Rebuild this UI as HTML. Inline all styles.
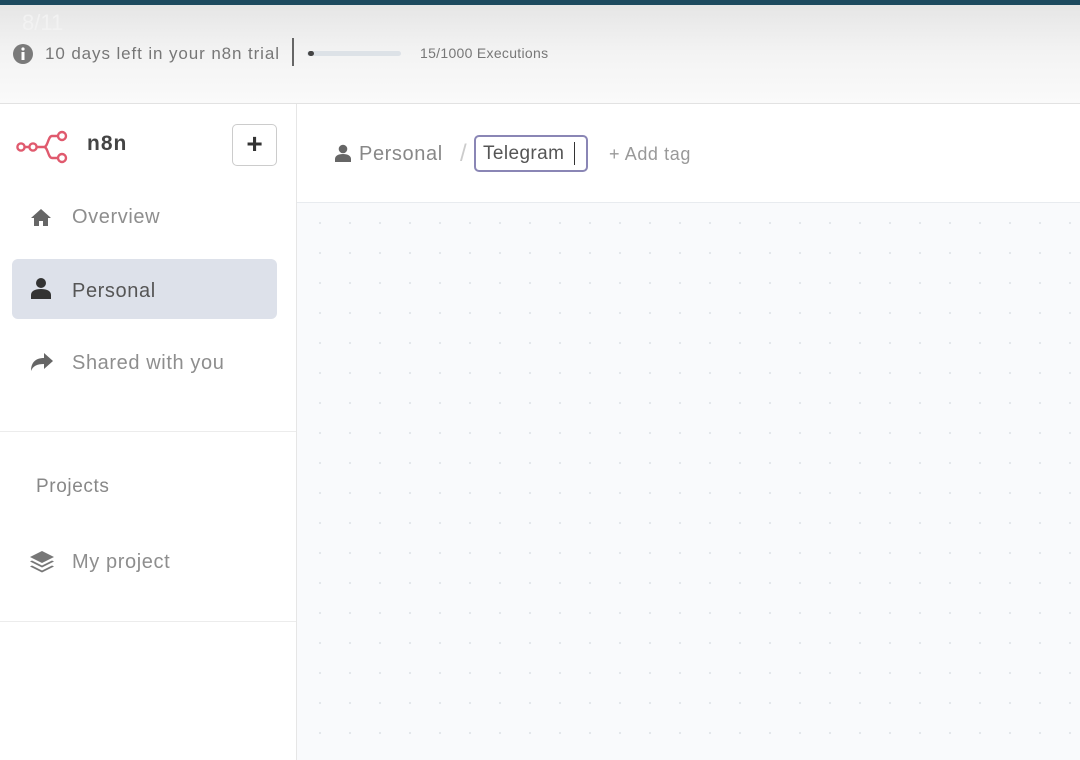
<!DOCTYPE html>
<html><head><meta charset="utf-8"><style>
*{box-sizing:border-box;margin:0;padding:0}
body{width:1080px;height:760px;overflow:hidden;font-family:"Liberation Sans",sans-serif;background:#fff;position:relative}
.top{position:absolute;left:0;top:0;width:1080px;height:104px;background:linear-gradient(#e4e4e4,#f3f3f3 50%,#fafafa);border-bottom:1px solid #e2e2e2}
.top .bar{position:absolute;left:0;top:0;width:1080px;height:5px;background:#1d4a5f}
.side{position:absolute;left:0;top:104px;width:297px;height:656px;background:#fff;border-right:1px solid #e6e6e6}
.hdr{position:absolute;left:297px;top:104px;width:783px;height:99px;background:#fff;border-bottom:1px solid #e8ebef}
.canvas{position:absolute;left:297px;top:203px;width:783px;height:557px;background-color:#f9fafc;background-image:radial-gradient(circle,#e3e6ea 1px,transparent 1.3px);background-size:30px 30px;background-position:8px 5px}
.t{position:absolute;white-space:nowrap}
.nav{position:absolute;left:30px;font-size:20px;color:#8e8e8e;letter-spacing:0.6px}
</style></head><body>
<div class="top"><div class="bar"></div>
<div class="t" style="left:22px;top:10px;font-size:22px;color:#f2f2f2">8/11</div>
<svg class="t" style="left:12px;top:43px" width="22" height="22"><circle cx="11" cy="11" r="10" fill="#7a7a7a"/><rect x="9.5" y="9" width="3" height="8" fill="#fff"/><circle cx="11" cy="6" r="1.6" fill="#fff"/></svg>
<div class="t" style="left:45px;top:44px;font-size:17px;color:#777;letter-spacing:0.9px">10 days left in your n8n trial</div>
<div class="t" style="left:292px;top:38px;width:2px;height:28px;background:#666"></div>
<div class="t" style="left:307px;top:51px;width:94px;height:5px;background:#dde2e7;border-radius:3px"></div>
<div class="t" style="left:308px;top:51px;width:6px;height:5px;background:#444;border-radius:3px"></div>
<div class="t" style="left:420px;top:45px;font-size:14px;color:#777;letter-spacing:0.3px">15/1000 Executions</div>
</div>
<div class="side">
<svg class="t" style="left:16px;top:24px" width="60" height="36" viewBox="0 0 60 36"><g fill="none" stroke="#e05a6e" stroke-width="2.4"><circle cx="5" cy="19" r="3.6"/><circle cx="17" cy="19" r="3.6"/><circle cx="46" cy="8" r="4"/><circle cx="46" cy="30" r="4"/><path d="M8.6 19H13.4M20.6 19H28M42 8H36C32 8 32 19 28 19C32 19 32 30 36 30H42"/></g></svg>
<div class="t" style="left:87px;top:28px;font-size:21px;font-weight:bold;color:#444;letter-spacing:1px">n8n</div>
<div class="t" style="left:232px;top:20px;width:45px;height:42px;border:1px solid #ccc;border-radius:5px;background:#fff;text-align:center;font-size:28px;line-height:38px;color:#333;font-weight:bold">+</div>
<svg class="t" style="left:30px;top:103px" width="22" height="20" viewBox="0 0 22 20"><path d="M11 2L1 11h3v8h5v-5h4v5h5v-8h3z" fill="#666"/></svg>
<div class="nav" style="left:72px;top:102px">Overview</div>
<div class="t" style="left:12px;top:155px;width:265px;height:60px;background:#dde1ea;border-radius:6px"></div>
<svg class="t" style="left:31px;top:173px" width="20" height="22" viewBox="0 0 20 22"><circle cx="10" cy="6" r="5" fill="#333"/><path d="M0 22v-4c0-4 4-6 10-6s10 2 10 6v4z" fill="#333"/></svg>
<div class="nav" style="left:72px;top:176px;color:#555">Personal</div>
<svg class="t" style="left:30px;top:248px" width="24" height="20" viewBox="0 0 24 20"><path d="M14 1l9 8-9 8v-5C7 12 3 14 1 19 1 11 5 6 14 6z" fill="#666"/></svg>
<div class="nav" style="left:72px;top:248px">Shared with you</div>
<div class="t" style="left:0;top:327px;width:296px;height:1px;background:#ececec"></div>
<div class="t" style="left:36px;top:372px;font-size:19px;color:#888;letter-spacing:0.6px">Projects</div>
<svg class="t" style="left:29px;top:446px" width="26" height="24" viewBox="0 0 26 24"><g fill="#777"><path d="M13 1l12 6-12 6L1 7z"/><path d="M3 10.5l10 5 10-5 2 1-12 6-12-6z"/><path d="M3 15.5l10 5 10-5 2 1-12 6-12-6z"/></g></svg>
<div class="nav" style="left:72px;top:447px">My project</div>
<div class="t" style="left:0;top:517px;width:296px;height:1px;background:#ececec"></div>
</div>
<div class="hdr">
<svg class="t" style="left:38px;top:40px" width="16" height="18" viewBox="0 0 16 18"><circle cx="8" cy="5" r="4.3" fill="#666"/><path d="M0 18v-3c0-3 3-5 8-5s8 2 8 5v3z" fill="#666"/></svg>
<div class="t" style="left:62px;top:39px;font-size:20px;color:#888;letter-spacing:0.6px">Personal</div>
<div class="t" style="left:163px;top:36px;font-size:24px;color:#ccc">/</div>
<div class="t" style="left:177px;top:31px;width:114px;height:37px;border:2px solid #8a86b5;border-radius:5px;background:#fff"></div>
<div class="t" style="left:186px;top:39px;font-size:19px;color:#555;letter-spacing:0.4px">Telegram</div>
<div class="t" style="left:277px;top:38px;width:1px;height:23px;background:#333"></div>
<div class="t" style="left:312px;top:40px;font-size:18px;color:#999;letter-spacing:0.6px">+ Add tag</div>
</div>
<div class="canvas"></div>
</body></html>
